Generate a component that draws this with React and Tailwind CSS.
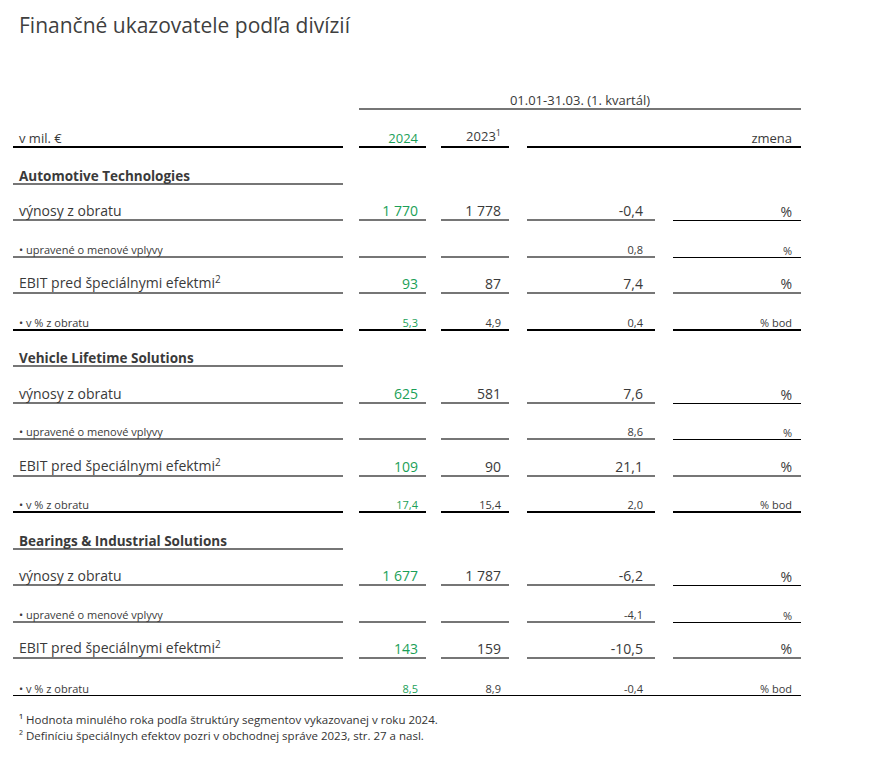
import React from "react";

const sections = [
  {
    name: "Automotive Technologies",
    rows: [
      ["1 770", "1 778", "-0,4"],
      ["", "", "0,8"],
      ["93", "87", "7,4"],
      ["5,3", "4,9", "0,4"],
    ],
  },
  {
    name: "Vehicle Lifetime Solutions",
    rows: [
      ["625", "581", "7,6"],
      ["", "", "8,6"],
      ["109", "90", "21,1"],
      ["17,4", "15,4", "2,0"],
    ],
  },
  {
    name: "Bearings & Industrial Solutions",
    rows: [
      ["1 677", "1 787", "-6,2"],
      ["", "", "-4,1"],
      ["143", "159", "-10,5"],
      ["8,5", "8,9", "-0,4"],
    ],
  },
];

const rowDefs = [
  { label: "výnosy z obratu", small: false, line: "border-b-2 border-[#767676]", unitLine: "border-b border-black", unit: "%" },
  { label: "• upravené o menové vplyvy", small: true, line: "border-b-2 border-[#767676]", unitLine: "border-b border-black", unit: "%" },
  { label: "EBIT pred špeciálnymi efektmi²", small: false, line: "border-b-2 border-[#767676]", unitLine: "border-b-2 border-[#767676]", unit: "%" },
  { label: "• v % z obratu", small: true, line: "border-b-2 border-black", unitLine: "border-b-2 border-black", unit: "% bod" },
];

function Label({ text }) {
  if (text.endsWith("²")) {
    return (
      <span>
        {text.slice(0, -1)}
        <span className="text-[10px] relative top-[-5px]">2</span>
      </span>
    );
  }
  return <span>{text}</span>;
}

function DataRow({ def, vals, last }) {
  const txt = def.small ? "text-[11px] leading-[13px]" : "text-[14px] leading-[16px]";
  if (last) {
    return (
      <div className="flex h-[36.5px] border-b border-black w-[788px]">
        <div className={`w-[330px] flex items-end pl-[6px] ${txt}`}><Label text={def.label} /></div>
        <div className={`ml-[16px] w-[67px] flex items-end justify-end pr-[8px] text-[#1b9f58] ${txt}`}>{vals[0]}</div>
        <div className={`ml-[15px] w-[68px] flex items-end justify-end pr-[8px] ${txt}`}>{vals[1]}</div>
        <div className={`ml-[18px] w-[128px] flex items-end justify-end pr-[12px] ${txt}`}>{vals[2]}</div>
        <div className={`ml-[18px] w-[128px] flex items-end justify-end pr-[9px] ${txt}`}>{def.unit}</div>
      </div>
    );
  }
  return (
    <div className="flex h-[36.5px]">
      <div className={`w-[330px] flex items-end pl-[6px] ${def.line} ${txt}`}><Label text={def.label} /></div>
      <div className={`ml-[16px] w-[67px] flex items-end justify-end pr-[8px] text-[#1b9f58] ${def.line} ${txt}`}>{vals[0]}</div>
      <div className={`ml-[15px] w-[68px] flex items-end justify-end pr-[8px] ${def.line} ${txt}`}>{vals[1]}</div>
      <div className={`ml-[18px] w-[128px] flex items-end justify-end pr-[12px] ${def.line} ${txt}`}>{vals[2]}</div>
      <div className={`ml-[18px] w-[128px] flex items-end justify-end pr-[9px] ${def.unitLine} ${txt}`}>{def.unit}</div>
    </div>
  );
}

export default function App() {
  return (
    <div className="w-[886px] h-[766px] bg-white text-[#3a3a3a] font-['Open_Sans',sans-serif] overflow-hidden">
      <div className="pt-[10px] pl-[19px] text-[21px] leading-[30px] text-[#3f3f3f]">
        Finančné ukazovatele podľa divízií
      </div>
      <div className="ml-[13px] mt-[48px]">
        <div className="flex h-[22px]">
          <div className="w-[330px]" />
          <div className="ml-[16px] w-[442px] border-b-2 border-[#767676] flex items-end justify-center text-[13px] leading-[16px]">
            01.01-31.03. (1. kvartál)
          </div>
        </div>
        <div className="flex h-[38px] text-[13px] leading-[16px]">
          <div className="w-[330px] flex items-end pl-[6px] border-b-2 border-black">v mil. €</div>
          <div className="ml-[16px] w-[67px] flex items-end justify-end pr-[8px] border-b-2 border-black text-[#1b9f58]">2024</div>
          <div className="ml-[15px] w-[68px] flex items-end justify-end pr-[8px] border-b-2 border-black">
            <span>2023<span className="text-[9px] relative top-[-5px]">1</span></span>
          </div>
          <div className="ml-[18px] w-[274px] flex items-end justify-end pr-[9px] border-b-2 border-black">zmena</div>
        </div>
        {sections.map((s, si) => (
          <div key={si}>
            <div className="flex h-[36.5px]">
              <div className="w-[330px] flex items-end pl-[6px] border-b-2 border-[#767676] text-[13.5px] leading-[14px] font-bold">
                {s.name}
              </div>
            </div>
            {s.rows.map((r, ri) => (
              <DataRow key={ri} def={rowDefs[ri]} vals={r} last={si === 2 && ri === 3} />
            ))}
          </div>
        ))}
        <div className="mt-[16px] pl-[6px] text-[11.5px] leading-[16px] text-[#333333]">
          <div>¹ Hodnota minulého roka podľa štruktúry segmentov vykazovanej v roku 2024.</div>
          <div>² Definíciu špeciálnych efektov pozri v obchodnej správe 2023, str. 27 a nasl.</div>
        </div>
      </div>
    </div>
  );
}
